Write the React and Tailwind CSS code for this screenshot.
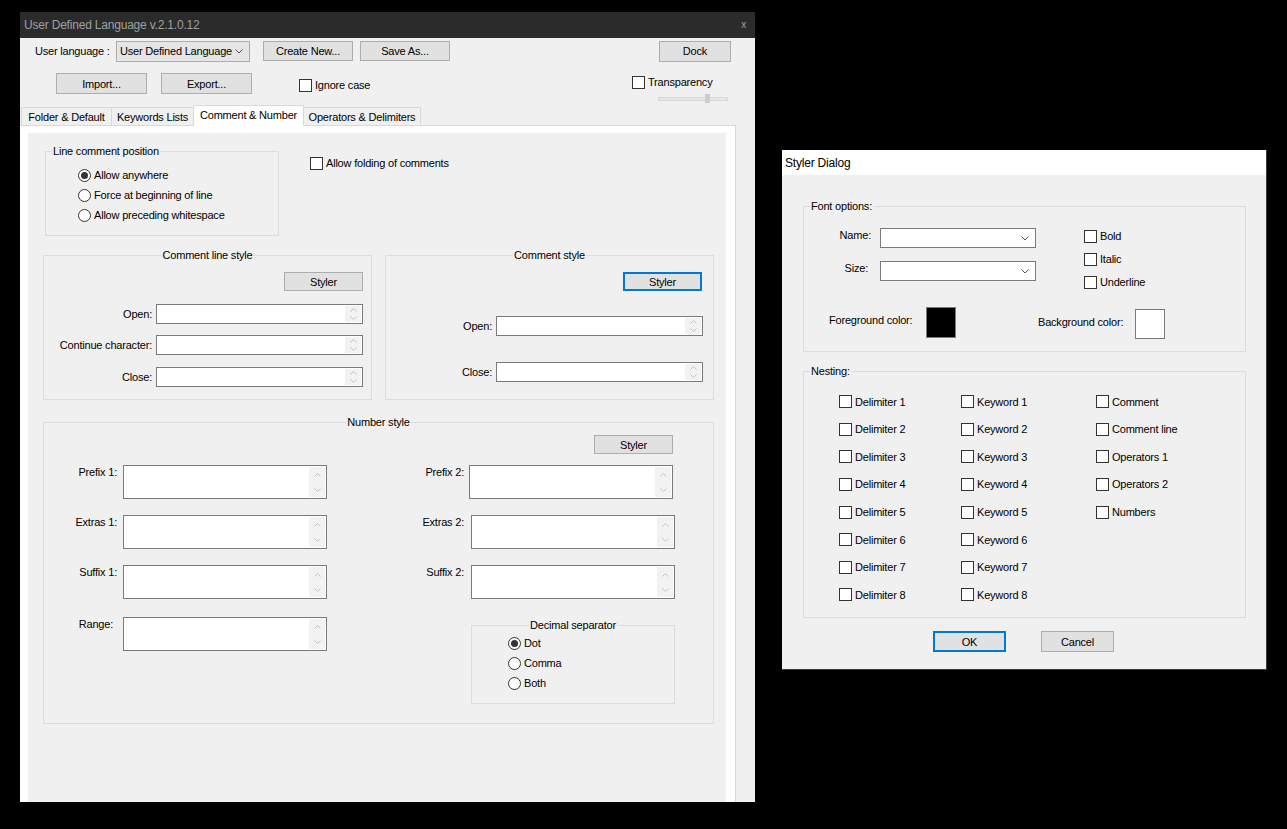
import React from "react";

const Btn = ({ focus, className = "", children }) => (
  <div
    className={`shrink-0 flex items-center justify-center bg-[#e1e1e1] ${
      focus ? "border-2 border-[#0078d7]" : "border border-[#adadad]"
    } ${className}`}
  >
    {children}
  </div>
);

const Check = ({ label, className = "" }) => (
  <div className={`flex items-center shrink-0 ${className}`}>
    <span className="w-[13px] h-[13px] border border-[#333333] bg-white shrink-0" />
    <span className="ml-[3px] whitespace-nowrap">{label}</span>
  </div>
);

const Radio = ({ label, checked }) => (
  <div className="flex items-center h-[20px]">
    <span className="w-[13px] h-[13px] rounded-full border border-[#333333] bg-white flex items-center justify-center shrink-0">
      {checked && <span className="w-[7px] h-[7px] rounded-full bg-[#333333]" />}
    </span>
    <span className="ml-[3px] whitespace-nowrap">{label}</span>
  </div>
);

const Chev = ({ up, color = "#c2c2c2" }) => (
  <svg width="7" height="4" viewBox="0 0 7 4">
    <path d={up ? "M0.5 3.5L3.5 0.5L6.5 3.5" : "M0.5 0.5L3.5 3.5L6.5 0.5"} fill="none" stroke={color} />
  </svg>
);

const Spin = ({ className = "" }) => (
  <div className={`shrink-0 bg-white border border-[#7a7a7a] flex justify-end p-[1px] ${className}`}>
    <div className="w-[16px] bg-[#f2f2f2] flex flex-col items-center justify-around">
      <Chev up />
      <Chev />
    </div>
  </div>
);

const Select = ({ text, grey, className = "" }) => (
  <div
    className={`shrink-0 flex items-center justify-between pl-[3px] pr-[6px] border ${
      grey ? "bg-[#e5e5e5] border-[#acacac]" : "bg-white border-[#7a7a7a]"
    } ${className}`}
  >
    <span className="whitespace-nowrap">{text}</span>
    <svg width="8" height="5" viewBox="0 0 8 5" className="shrink-0">
      <path d="M0.5 0.5L4 4L7.5 0.5" fill="none" stroke="#555555" />
    </svg>
  </div>
);

const Group = ({ title, center, className = "", children }) => (
  <fieldset className={`shrink-0 min-w-0 border border-[#dcdcdc] ${className}`}>
    <legend className={`px-[1px] leading-[14px] whitespace-nowrap ${center ? "mx-auto" : "ml-[6px]"}`}>
      {title}
    </legend>
    {children}
  </fieldset>
);

const Field = ({ label, className = "" }) => (
  <div className={`flex items-center ${className}`}>
    <span className="mr-[4px] whitespace-nowrap">{label}</span>
    <Spin className="w-[207px] h-[20px]" />
  </div>
);

const Tab = ({ active, className = "", children }) => (
  <div
    className={`shrink-0 flex justify-center whitespace-nowrap border-t border-l border-r border-[#d9d9d9] ${
      active ? "h-[21px] -mb-[1px] pt-[2px] bg-white relative z-10" : "h-[18px] pt-[2px] bg-[#f0f0f0]"
    } ${className}`}
  >
    {children}
  </div>
);

const rowHeights = ["h-[27px]", "h-[28px]", "h-[27px]", "h-[28px]", "h-[28px]", "h-[27px]", "h-[28px]", "h-[27px]"];

export default function App() {
  const delims = [1, 2, 3, 4, 5, 6, 7, 8];
  const others = ["Comment", "Comment line", "Operators 1", "Operators 2", "Numbers"];

  return (
    <div className="w-[1287px] h-[829px] bg-black flex items-start overflow-hidden text-[11px] leading-[14px] tracking-[-0.2px] text-black font-['Liberation_Sans',Arial,sans-serif]">
      {/* User Defined Language window */}
      <div className="ml-[20px] mt-[12px] w-[735px] h-[790px] bg-[#f0f0f0] flex flex-col overflow-hidden shrink-0">
        <div className="h-[26px] shrink-0 bg-[#2b2b2b] flex items-center justify-between pl-[4px] pr-[9px] text-[#a0a0a0] text-[12px]">
          <span>User Defined Language v.2.1.0.12</span>
          <span className="text-[10px]">x</span>
        </div>

        <div className="mt-[2px] h-[22px] shrink-0 flex items-center">
          <span className="ml-[15px] w-[81px] whitespace-nowrap">User language :</span>
          <Select grey text="User Defined Language" className="w-[134px] h-[21px]" />
          <Btn className="ml-[13px] w-[90px] h-[20px]">Create New...</Btn>
          <Btn className="ml-[7px] w-[90px] h-[20px]">Save As...</Btn>
          <Btn className="ml-[209px] w-[72px] h-[21px]">Dock</Btn>
        </div>

        <div className="mt-[11px] h-[32px] shrink-0 flex items-start">
          <Btn className="ml-[36px] w-[91px] h-[21px]">Import...</Btn>
          <Btn className="ml-[14px] w-[91px] h-[21px]">Export...</Btn>
          <Check className="ml-[47px] mt-[5px]" label="Ignore case" />
          <div className="ml-auto mr-[27px] w-[96px] flex flex-col">
            <Check className="mt-[2px]" label="Transparency" />
            <div className="relative ml-[26px] mt-[8px] w-[70px] h-[4px] bg-[#e7e7e7] border border-[#d6d6d6]">
              <div className="absolute left-[46px] top-[-4px] w-[5px] h-[9px] bg-[#cccccc]" />
            </div>
          </div>
        </div>

        {/* tabs */}
        <div className="h-[20px] shrink-0 flex items-end pl-[1px]">
          <Tab className="w-[91px]">Folder &amp; Default</Tab>
          <Tab className="-ml-[1px] w-[83px]">Keywords Lists</Tab>
          <Tab active className="-ml-[1px] w-[111px]">Comment &amp; Number</Tab>
          <Tab className="-ml-[1px] w-[118px]">Operators &amp; Delimiters</Tab>
        </div>

        <div className="flex-1 w-[716px] border-t border-r border-[#d9d9d9] bg-white pl-[8px] pr-[9px] pt-[7px] flex flex-col">
          <div className="flex-1 bg-[#f0f0f0] flex flex-col">
            {/* line comment position */}
            <div className="flex items-start">
              <Group title="Line comment position" className="ml-[17px] mt-[11px] w-[234px] h-[92px]">
                <div className="pl-[32px] pt-[7px]">
                  <Radio checked label="Allow anywhere" />
                  <Radio label="Force at beginning of line" />
                  <Radio label="Allow preceding whitespace" />
                </div>
              </Group>
              <Check className="ml-[31px] mt-[23px]" label="Allow folding of comments" />
            </div>

            {/* comment styles */}
            <div className="flex mt-[12px] ml-[15px]">
              <Group center title="Comment line style" className="w-[329px] h-[152px]">
                <div className="flex flex-col items-end pr-[8px]">
                  <Btn className="mt-[10px] w-[79px] h-[19px]">Styler</Btn>
                  <Field label="Open:" className="mt-[13px]" />
                  <Field label="Continue character:" className="mt-[11px]" />
                  <Field label="Close:" className="mt-[12px]" />
                </div>
              </Group>
              <Group center title="Comment style" className="ml-[13px] w-[329px] h-[152px]">
                <div className="flex flex-col items-end pr-[10px]">
                  <Btn focus className="mt-[10px] mr-[1px] w-[79px] h-[19px]">Styler</Btn>
                  <Field label="Open:" className="mt-[25px]" />
                  <Field label="Close:" className="mt-[26px]" />
                </div>
              </Group>
            </div>

            {/* number style */}
            <Group center title="Number style" className="ml-[15px] mt-[15px] w-[671px] h-[309px]">
              <div className="flex justify-end pr-[40px]">
                <Btn className="mt-[6px] w-[79px] h-[19px]">Styler</Btn>
              </div>
              <div className="mt-[11px] flex items-start">
                <span className="w-[73px] text-right">Prefix 1:</span>
                <Spin className="ml-[6px] w-[204px] h-[34px]" />
                <span className="w-[137px] text-right">Prefix 2:</span>
                <Spin className="ml-[5px] w-[204px] h-[34px]" />
              </div>
              <div className="mt-[16px] flex items-start">
                <span className="w-[73px] text-right">Extras 1:</span>
                <Spin className="ml-[6px] w-[204px] h-[34px]" />
                <span className="w-[137px] text-right">Extras 2:</span>
                <Spin className="ml-[7px] w-[204px] h-[34px]" />
              </div>
              <div className="mt-[16px] flex items-start">
                <span className="w-[73px] text-right">Suffix 1:</span>
                <Spin className="ml-[6px] w-[204px] h-[34px]" />
                <span className="w-[137px] text-right">Suffix 2:</span>
                <Spin className="ml-[7px] w-[204px] h-[34px]" />
              </div>
              <div className="mt-[18px] flex items-start">
                <span className="w-[73px] text-right pr-[4px]">Range:</span>
                <Spin className="ml-[6px] w-[204px] h-[34px]" />
                <span className="w-[137px]" />
                <Group center title="Decimal separator" className="ml-[7px] mt-[1px] w-[204px] h-[86px]">
                  <div className="pl-[36px] pt-[1px]">
                    <Radio checked label="Dot" />
                    <Radio label="Comma" />
                    <Radio label="Both" />
                  </div>
                </Group>
              </div>
            </Group>
          </div>
        </div>
      </div>

      {/* Styler Dialog */}
      <div className="ml-[27px] mt-[150px] w-[485px] h-[520px] bg-[#f0f0f0] flex flex-col shrink-0 border-r border-b border-[#3a3a3a]">
        <div className="h-[25px] shrink-0 bg-white flex items-center pl-[3px] text-[12px]">Styler Dialog</div>
        <div className="pl-[21px] flex flex-col">
          <Group title="Font options:" className="mt-[24px] w-[443px] h-[153px]">
            <div className="flex items-start h-[68px]">
              <div className="flex flex-col">
                <div className="mt-[15px] flex items-start">
                  <span className="w-[67px] text-right">Name:</span>
                  <Select className="ml-[9px] w-[156px] h-[20px]" />
                </div>
                <div className="mt-[13px] flex items-start">
                  <span className="w-[64px] text-right">Size:</span>
                  <Select className="ml-[12px] w-[156px] h-[20px]" />
                </div>
              </div>
              <div className="ml-[48px] mt-[16px] flex flex-col">
                <Check label="Bold" />
                <Check className="mt-[9px]" label="Italic" />
                <Check className="mt-[9px]" label="Underline" />
              </div>
            </div>
            <div className="mt-[26px] flex items-start">
              <span className="ml-[25px] mt-[6px] w-[97px] whitespace-nowrap">Foreground color:</span>
              <div className="w-[30px] h-[31px] bg-black border border-[#7a7a7a]" />
              <span className="ml-[82px] mt-[8px] w-[97px] whitespace-nowrap">Background color:</span>
              <div className="mt-[2px] w-[30px] h-[30px] bg-white border border-[#7a7a7a]" />
            </div>
          </Group>

          <Group title="Nesting:" className="mt-[12px] w-[443px] h-[254px]">
            <div className="flex pl-[35px] pt-[10px]">
              <div className="w-[122px] flex flex-col">
                {delims.map((n, i) => (
                  <Check key={n} className={rowHeights[i]} label={`Delimiter ${n}`} />
                ))}
              </div>
              <div className="w-[135px] flex flex-col">
                {delims.map((n, i) => (
                  <Check key={n} className={rowHeights[i]} label={`Keyword ${n}`} />
                ))}
              </div>
              <div className="flex flex-col">
                {others.map((t, i) => (
                  <Check key={t} className={rowHeights[i]} label={t} />
                ))}
              </div>
            </div>
          </Group>

          <div className="mt-[13px] ml-[130px] flex">
            <Btn focus className="w-[73px] h-[21px]">OK</Btn>
            <Btn className="ml-[35px] w-[73px] h-[21px]">Cancel</Btn>
          </div>
        </div>
      </div>
    </div>
  );
}
